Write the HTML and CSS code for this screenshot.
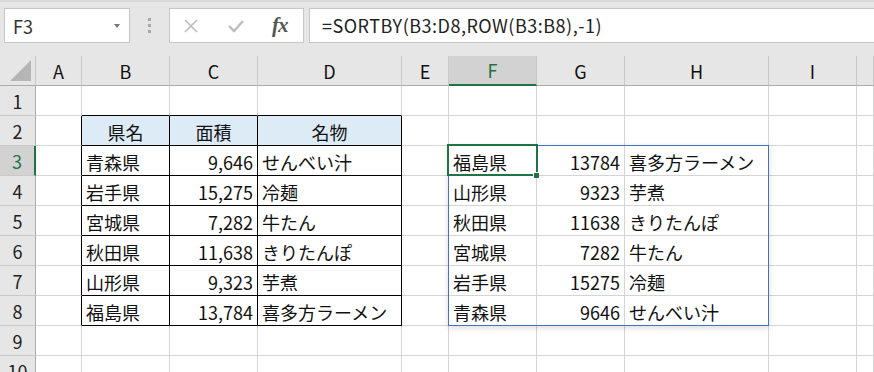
FILE: index.html
```html
<!DOCTYPE html>
<html lang="ja">
<head>
    <meta charset="UTF-8">
    <title>SORTBY</title>
    <link rel="stylesheet" href="styles.css">
</head>
<body>
    <!-- barre de formule -->
    <div class="toolbar">
        <div class="namebox">
            <span>F3</span>
            <span class="arrow"></span>
        </div>
        <div class="grip"><i></i><i></i><i></i></div>
        <div class="fnbox">
            <svg class="ico-x" width="16" height="16" viewBox="0 0 16 16"><path d="M2 2 L14 14 M14 2 L2 14" stroke="#bcbcbc" stroke-width="1.6" fill="none"/></svg>
            <svg class="ico-ok" width="18" height="16" viewBox="0 0 18 16"><path d="M2 8 L7 13 L16 3" stroke="#bcbcbc" stroke-width="2.4" fill="none"/></svg>
            <span class="fx">fx</span>
        </div>
        <div class="formula">=SORTBY(B3:D8,ROW(B3:B8),-1)</div>
    </div>

    <!-- feuille -->
    <div class="sheet">
        <div class="row head">
            <div class="corner"></div>
            <div class="ch">A</div><div class="ch">B</div><div class="ch">C</div><div class="ch">D</div><div class="ch">E</div>
            <div class="ch sel">F</div><div class="ch">G</div><div class="ch">H</div><div class="ch">I</div><div class="ch"></div>
        </div>
        <div class="row">
            <div class="rh">1</div>
            <div class="c"></div><div class="c tt"></div><div class="c tt"></div><div class="c tt"></div><div class="c"></div>
            <div class="c"></div><div class="c"></div><div class="c"></div><div class="c"></div><div class="c"></div>
        </div>
        <div class="row">
            <div class="rh">2</div>
            <div class="c tl"></div><div class="c t th">県名</div><div class="c t th">面積</div><div class="c t th">名物</div><div class="c"></div>
            <div class="c"></div><div class="c"></div><div class="c"></div><div class="c"></div><div class="c"></div>
        </div>
        <div class="row">
            <div class="rh sel">3</div>
            <div class="c tl"></div><div class="c t">青森県</div><div class="c t num">9,646</div><div class="c t">せんべい汁</div><div class="c"></div>
            <div class="c">福島県</div><div class="c num">13784</div><div class="c">喜多方ラーメン</div><div class="c"></div><div class="c"></div>
        </div>
        <div class="row">
            <div class="rh">4</div>
            <div class="c tl"></div><div class="c t">岩手県</div><div class="c t num">15,275</div><div class="c t">冷麺</div><div class="c"></div>
            <div class="c">山形県</div><div class="c num">9323</div><div class="c">芋煮</div><div class="c"></div><div class="c"></div>
        </div>
        <div class="row">
            <div class="rh">5</div>
            <div class="c tl"></div><div class="c t">宮城県</div><div class="c t num">7,282</div><div class="c t">牛たん</div><div class="c"></div>
            <div class="c">秋田県</div><div class="c num">11638</div><div class="c">きりたんぽ</div><div class="c"></div><div class="c"></div>
        </div>
        <div class="row">
            <div class="rh">6</div>
            <div class="c tl"></div><div class="c t">秋田県</div><div class="c t num">11,638</div><div class="c t">きりたんぽ</div><div class="c"></div>
            <div class="c">宮城県</div><div class="c num">7282</div><div class="c">牛たん</div><div class="c"></div><div class="c"></div>
        </div>
        <div class="row">
            <div class="rh">7</div>
            <div class="c tl"></div><div class="c t">山形県</div><div class="c t num">9,323</div><div class="c t">芋煮</div><div class="c"></div>
            <div class="c">岩手県</div><div class="c num">15275</div><div class="c">冷麺</div><div class="c"></div><div class="c"></div>
        </div>
        <div class="row">
            <div class="rh">8</div>
            <div class="c tl"></div><div class="c t">福島県</div><div class="c t num">13,784</div><div class="c t">喜多方ラーメン</div><div class="c"></div>
            <div class="c">青森県</div><div class="c num">9646</div><div class="c">せんべい汁</div><div class="c"></div><div class="c"></div>
        </div>
        <div class="row">
            <div class="rh">9</div>
            <div class="c"></div><div class="c"></div><div class="c"></div><div class="c"></div><div class="c"></div>
            <div class="c"></div><div class="c"></div><div class="c"></div><div class="c"></div><div class="c"></div>
        </div>
        <div class="row">
            <div class="rh">10</div>
            <div class="c"></div><div class="c"></div><div class="c"></div><div class="c"></div><div class="c"></div>
            <div class="c"></div><div class="c"></div><div class="c"></div><div class="c"></div><div class="c"></div>
        </div>

        <!-- plage renversée et cellule active -->
        <div class="spill"></div>
        <div class="active"><span class="handle"></span></div>
    </div>
</body>
</html>
```

FILE: styles.css
```css
/* Style de base */
body {
    margin: 0;
    background-color: #ffffff;
    font-family: "Noto Sans CJK JP", "Noto Sans", sans-serif;
    color: #111;
    overflow: hidden;
}

/* Barre de formule */
.toolbar {
    height: 56px;
    box-sizing: border-box;
    background-color: #e6e6e6;
    border-top: 2px solid #d9d9d9;
    padding-top: 6px;
    display: flex;
    align-items: flex-start;
}

.namebox {
    width: 126px;
    height: 35px;
    margin-left: 4px;
    box-sizing: border-box;
    background: #fff;
    border: 1px solid #c6c6c6;
    display: flex;
    align-items: center;
    padding-left: 8px;
    font-size: 18px;
    color: #333;
}

.arrow {
    margin-left: auto;
    margin-right: 9px;
    border-left: 3.5px solid transparent;
    border-right: 3.5px solid transparent;
    border-top: 4px solid #777;
}

.grip {
    width: 39px;
    height: 35px;
    display: flex;
    flex-direction: column;
    align-items: center;
    justify-content: center;
    gap: 3px;
}

.grip i {
    width: 3px;
    height: 3px;
    background: #a9a9a9;
}

.fnbox {
    width: 135px;
    height: 35px;
    box-sizing: border-box;
    background: #fff;
    border: 1px solid #c6c6c6;
    display: flex;
    align-items: center;
    padding-left: 13px;
}

.ico-ok {
    margin-left: 28px;
}

.fx {
    margin-left: 27px;
    font-family: "Liberation Serif", serif;
    font-style: italic;
    font-weight: bold;
    font-size: 21px;
    color: #555;
    letter-spacing: -1px;
}

.formula {
    flex: 1;
    height: 35px;
    margin-left: 5px;
    margin-right: -2px;
    box-sizing: border-box;
    background: #fff;
    border: 1px solid #c6c6c6;
    padding-left: 12px;
    font-size: 18px;
    line-height: 33px;
    letter-spacing: 0.5px;
    color: #222;
}

/* Feuille */
.sheet {
    position: relative;
}

.row {
    display: grid;
    grid-template-columns: 36px 46px 88px 88px 144px 47px 88px 88px 144px 88px 1fr;
    height: 30px;
}

.row > div {
    box-sizing: border-box;
    border-right: 1px solid #d4d4d4;
    border-bottom: 1px solid #d4d4d4;
    display: flex;
    align-items: center;
    white-space: nowrap;
    overflow: hidden;
}

.head > div {
    background: #e6e6e6;
    border-right-color: #c8c8c8;
    border-bottom-color: #ababab;
    justify-content: center;
    font-size: 18px;
    color: #111;
}

.corner {
    position: relative;
}

.corner::after {
    content: "";
    position: absolute;
    right: 4px;
    bottom: 4px;
    border-left: 21px solid transparent;
    border-bottom: 21px solid #b5b5b5;
}

.ch.sel {
    background: #d2d2d2;
    color: #217346;
    border-bottom: 2px solid #217346;
}

.row > .rh {
    background: #e6e6e6;
    border-right-color: #ababab;
    border-bottom-color: #c8c8c8;
    justify-content: center;
    font-size: 18px;
    color: #222;
}

.row > .rh.sel {
    background: #d2d2d2;
    color: #217346;
    border-right: 2px solid #217346;
}

.c {
    padding: 2px 4px 0;
    font-size: 18px;
}

.num {
    justify-content: flex-end;
}

/* Tableau source */
.row > .tt {
    border-bottom-color: #000;
}

.row > .tl {
    border-right-color: #000;
}

.row > .t {
    border-right-color: #000;
    border-bottom-color: #000;
}

.th {
    background: #ddebf7;
    justify-content: center;
}

.spill {
    position: absolute;
    left: 448px;
    top: 89px;
    width: 321px;
    height: 181px;
    box-sizing: border-box;
    border: 1px solid #4472c4;
    box-shadow: 0 2px 6px rgba(0, 0, 0, 0.14);
    pointer-events: none;
}

.active {
    position: absolute;
    left: 447px;
    top: 88px;
    width: 91px;
    height: 32px;
    box-sizing: border-box;
    border: 2px solid #217346;
}

.handle {
    position: absolute;
    right: -3px;
    bottom: -4px;
    width: 5px;
    height: 5px;
    background: #217346;
    border-left: 1px solid #fff;
    border-top: 1px solid #fff;
}
```
